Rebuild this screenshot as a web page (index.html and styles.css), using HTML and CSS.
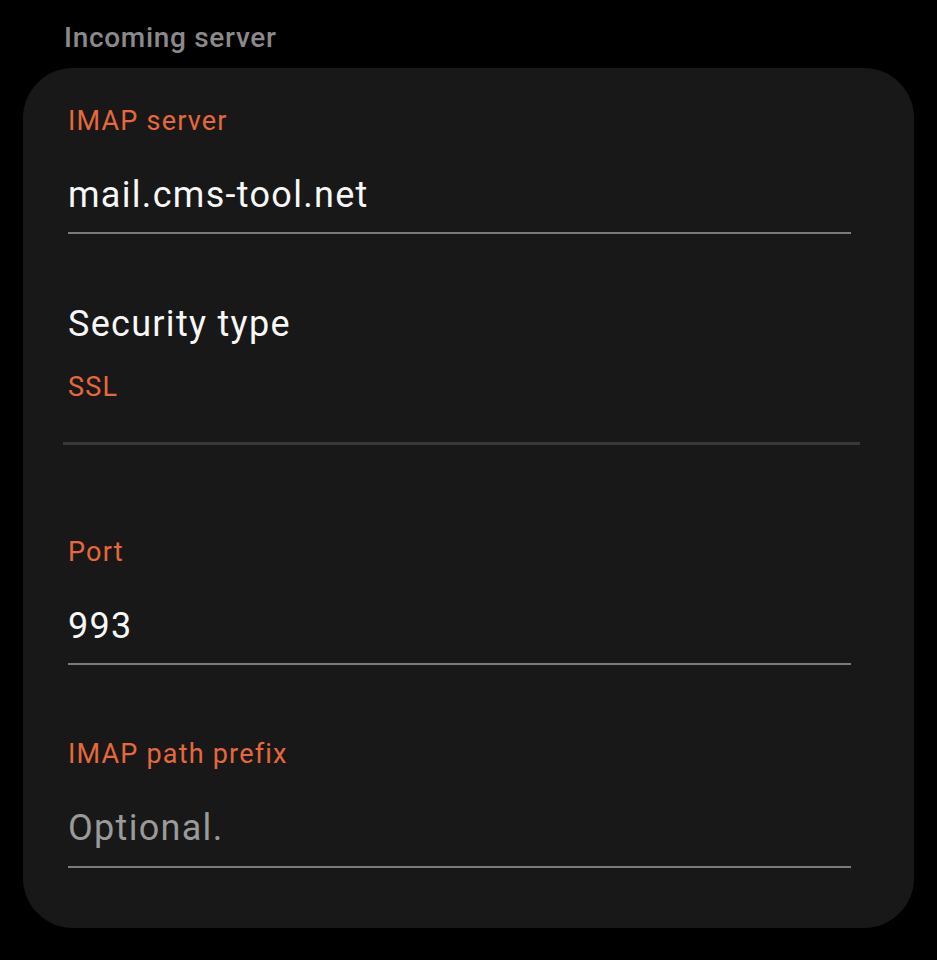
FILE: index.html
```html
<!DOCTYPE html>
<html>
<head>
<meta charset="utf-8">
<link rel="stylesheet" href="styles.css">
</head>
<body>
<div class="screen">
  <div class="section-title">Incoming server</div>
  <div class="card">
    <div class="field field-first">
      <div class="label">IMAP server</div>
      <div class="value">mail.cms-tool.net</div>
    </div>
    <div class="select">
      <div class="select-title">Security type</div>
      <div class="select-value">SSL</div>
    </div>
    <div class="field field-port">
      <div class="label">Port</div>
      <div class="value">993</div>
    </div>
    <div class="field field-prefix">
      <div class="label">IMAP path prefix</div>
      <div class="value placeholder">Optional.</div>
    </div>
  </div>
</div>
</body>
</html>
```
FILE: styles.css
```css
html, body {
  margin: 0;
  padding: 0;
  background: #000;
}
.screen {
  width: 937px;
  height: 960px;
  font-family: Roboto, "Noto Sans", sans-serif;
  overflow: hidden;
}
.section-title {
  padding: 21px 0 0 64px;
  height: 68px;
  box-sizing: border-box;
  font-size: 28px;
  line-height: 34px;
  font-weight: 500;
  letter-spacing: 0.7px;
  color: #8a8a8a;
}
.card {
  margin-left: 23px;
  width: 891px;
  height: 860px;
  box-sizing: border-box;
  background: #181818;
  border-radius: 50px;
  padding: 37px 63px 0 45px;
}
.label {
  font-size: 27px;
  line-height: 32px;
  letter-spacing: 1.2px;
  color: #e6683b;
}
.value {
  margin-top: 36px;
  font-size: 36px;
  line-height: 44px;
  letter-spacing: 1.3px;
  color: #f7f7f7;
  padding-bottom: 15px;
  border-bottom: 2px solid #7b7b7b;
}
.value.placeholder {
  color: #9a9a9a;
  padding-bottom: 16px;
}
.select {
  margin: 68px -9px 0 -5px;
  padding-left: 5px;
  padding-bottom: 39px;
  border-bottom: 3px solid #383838;
}
.select-title {
  font-size: 36px;
  line-height: 44px;
  letter-spacing: 1.3px;
  color: #f7f7f7;
}
.select-value {
  margin-top: 25px;
  font-size: 27px;
  line-height: 32px;
  letter-spacing: 1.2px;
  color: #e6683b;
}
.field-port {
  margin-top: 91px;
}
.field-prefix {
  margin-top: 73px;
}
```
